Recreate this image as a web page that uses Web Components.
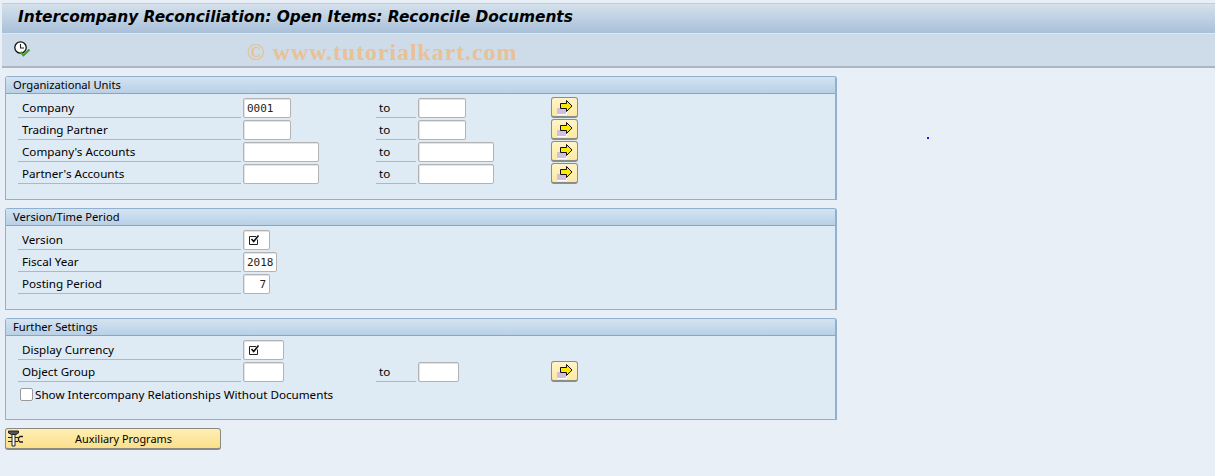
<!DOCTYPE html>
<html>
<head>
<meta charset="utf-8">
<title>Reconcile Documents</title>
<style>
html, body { margin: 0; padding: 0; height: 476px; overflow: hidden; }
body { background: #e8eff7; font-family: "Noto Sans", sans-serif; font-size: 11.65px; color: #000; }
</style>
</head>
<body>
<sap-screen>
  <sap-title>Intercompany Reconciliation: Open Items: Reconcile Documents</sap-title>
  <sap-toolbar></sap-toolbar>
  <sap-group heading="Organizational Units" rows="4">
    <sap-row label="Company" value="0001" w="48" to="48" more></sap-row>
    <sap-row label="Trading Partner" w="48" to="48" more></sap-row>
    <sap-row label="Company's Accounts" w="76" to="76" more></sap-row>
    <sap-row label="Partner's Accounts" w="76" to="76" more></sap-row>
  </sap-group>
  <sap-group heading="Version/Time Period" rows="3">
    <sap-row label="Version" w="27" checked></sap-row>
    <sap-row label="Fiscal Year" value="2018" w="34"></sap-row>
    <sap-row label="Posting Period" value="7" w="27" right></sap-row>
  </sap-group>
  <sap-group heading="Further Settings" rows="3">
    <sap-row label="Display Currency" w="41" checked></sap-row>
    <sap-row label="Object Group" w="41" to="41" more></sap-row>
    <sap-check>Show Intercompany Relationships Without Documents</sap-check>
  </sap-group>
  <sap-button>Auxiliary Programs</sap-button>
</sap-screen>
<script>
const arrowIcon = `<svg width="25" height="18" viewBox="0 0 25 18">
  <path d="M5 10h9v6H5z" fill="#d2bedd"/>
  <path d="M14.5 10v6.5H5" fill="none" stroke="#fff" stroke-width="1"/>
  <path d="M8.5 5.5h6v-3l5.5 5.5-5.5 5.5v-3h-6z" fill="#ffe800" stroke="#111" stroke-width="1"/>
</svg>`;

class SapScreen extends HTMLElement {
    constructor() {
        super();
        this.attachShadow({mode: 'open'}).innerHTML = `<style>
:host { display: flow-root; position: relative; height: 476px; }
.wm { position: absolute; left: 247px; top: 39px; font: bold 24px "Liberation Serif", serif; color: #e9c196; white-space: nowrap; letter-spacing: .9px; }
.dot { position: absolute; left: 927px; top: 137px; width: 2px; height: 2px; background: #1a1ae0; }
</style>
<slot></slot>
<div class="wm">© www.tutorialkart.com</div>
<div class="dot"></div>`;
    }
}

class SapTitle extends HTMLElement {
    constructor() {
        super();
        this.attachShadow({mode: 'open'}).innerHTML = `<style>
:host { display: flex; align-items: center; height: 31px; margin: 3px 0 0 2px; padding: 0 0 3px 16px; box-sizing: border-box;
  background: linear-gradient(#d5e1ec, #a8c0d9); border-top: 1px solid #c3ccd6; border-bottom: 1px solid #dfe8f0;
  font: italic bold 15.4px "DejaVu Sans", sans-serif; white-space: nowrap; }
</style><slot></slot>`;
    }
}

class SapToolbar extends HTMLElement {
    constructor() {
        super();
        this.attachShadow({mode: 'open'}).innerHTML = `<style>
:host { display: flex; align-items: center; height: 34px; margin-left: 2px; padding-left: 12px; box-sizing: border-box;
  background: #cddce8; border-bottom: 2px solid #aab6c2; }
svg { display: block; margin-top: -1px; }
</style>
<svg width="17" height="17" viewBox="0 0 17 17">
  <circle cx="6.5" cy="6.5" r="5.7" fill="#fff" stroke="#111" stroke-width="1.3"/>
  <path d="M6.5 3v4h3.5" fill="none" stroke="#222" stroke-width="1.1"/>
  <path d="M6.5 11l3 3.2L15.5 8.5" fill="none" stroke="#4c9a2a" stroke-width="2.2"/>
</svg>`;
    }
}

class SapGroup extends HTMLElement {
    constructor() {
        super();
        const rows = Number(this.getAttribute('rows'));
        this.attachShadow({mode: 'open'}).innerHTML = `<style>
:host { display: block; width: 832px; margin: 8px 0 0 5px; box-sizing: border-box; height: ${rows === 4 ? 124 : 102}px;
  background: #deeaf4; border: 1px solid #90b0cf; border-radius: 3px 3px 0 0; border-width: 1px 2px 1px 1px; }
.head { height: 17px; line-height: 16px; padding-left: 7px; box-sizing: border-box; font-size: 11.2px;
  background: linear-gradient(#d4e3f1, #b8d0e6); border-bottom: 1px solid #88a6c2; white-space: nowrap; }
.body { padding: 3px 0 0 12px; display: flex; flex-direction: column; }
</style>
<div class="head"></div>
<div class="body"><slot></slot></div>`;
        this.shadowRoot.querySelector('.head').textContent = this.getAttribute('heading');
    }
}

class SapRow extends HTMLElement {
    constructor() {
        super();
        const w = this.getAttribute('w');
        const to = this.getAttribute('to');
        const value = this.getAttribute('value') || '';
        const right = this.hasAttribute('right') ? ' right' : '';
        const tick = this.hasAttribute('checked')
            ? `<svg width="12" height="12" viewBox="0 0 12 12"><path d="M9.5 5.5V10.5H1.5V2.5H8" fill="none" stroke="#222" stroke-width="1"/><path d="M3.5 5l2.2 2.5L10.5 1.5" fill="none" stroke="#111" stroke-width="1.6"/></svg>`
            : '';
        this.attachShadow({mode: 'open'}).innerHTML = `<style>
:host { display: grid; grid-template-columns: 225px 133px 42px 133px 27px; height: 22px; }
.lab { height: 21px; line-height: 21px; padding-left: 4px; margin-right: 2px; box-sizing: border-box; border-bottom: 1px solid #b0b7bf; white-space: nowrap; }
.to { padding-left: 3px; }
.fld { height: 20px; margin-top: 1px; box-sizing: border-box; background: #fff; border: 1px solid #b3b3b3; border-radius: 2px;
  padding: 0 3px; font: 11px/19px "DejaVu Sans Mono", monospace; color: #222; box-shadow: inset 1px 1px 0 #e4e4e4; }
.right { text-align: right; }
.fld svg { display: block; margin: 3px 0 0 1px; }
.btn { box-sizing: border-box; height: 21px; display: flex; align-items: center; justify-content: center;
  background: linear-gradient(#fff4c8, #fde9a4); border: 1px solid #8d8d85; border-bottom-width: 2px; border-radius: 3px; }
</style>
<div class="lab"></div>
<div><div class="fld${right}" style="width:${w}px">${tick}<span class="v"></span></div></div>
${to ? `<div class="lab to">to</div>
<div><div class="fld" style="width:${to}px"></div></div>` : ''}
${this.hasAttribute('more') ? `<div class="btn">${arrowIcon}</div>` : ''}`;
        this.shadowRoot.querySelector('.lab').textContent = this.getAttribute('label');
        this.shadowRoot.querySelector('.v').textContent = value;
    }
}

class SapCheck extends HTMLElement {
    constructor() {
        super();
        this.attachShadow({mode: 'open'}).innerHTML = `<style>
:host { display: flex; align-items: center; height: 22px; padding-left: 2px; white-space: nowrap; }
.box { width: 11px; height: 11px; margin-right: 2px; background: #fff; border: 1px solid #9a9a9a; border-radius: 2px; }
</style><div class="box"></div><slot></slot>`;
    }
}

class SapButton extends HTMLElement {
    constructor() {
        super();
        this.attachShadow({mode: 'open'}).innerHTML = `<style>
:host { display: flex; align-items: center; box-sizing: border-box; width: 216px; height: 22px; margin: 8px 0 0 5px;
  background: linear-gradient(#ffefb4, #fbdf8b); border: 1px solid #8a8a80; border-bottom-width: 2px; border-radius: 3px; font-size: 10.9px; }
svg { display: block; flex: none; margin-left: 1px; }
span { flex: 1; text-align: center; padding-left: 3px; margin-top: -1px; }
</style>
<svg width="17" height="17" viewBox="0 0 17 17">
  <path d="M1.5 1h10v2l-2.5 1.5H4.5L1.5 3z" fill="#555" stroke="#222" stroke-width="1"/>
  <path d="M5 4.5h3v11.5H5z" fill="#fff" stroke="#222" stroke-width="1"/>
  <path d="M1 7.5h4M1 11.5h4M8 7.5h3M8 11.5h3" stroke="#222" stroke-width="1.2"/>
  <path d="M16 6.5h-3l-1.5 1.5v2.5l1.5 1.5h3" fill="none" stroke="#222" stroke-width="1.3"/>
</svg>
<span><slot></slot></span>`;
    }
}

customElements.define('sap-screen', SapScreen);
customElements.define('sap-title', SapTitle);
customElements.define('sap-toolbar', SapToolbar);
customElements.define('sap-group', SapGroup);
customElements.define('sap-row', SapRow);
customElements.define('sap-check', SapCheck);
customElements.define('sap-button', SapButton);
</script>
</body>
</html>
